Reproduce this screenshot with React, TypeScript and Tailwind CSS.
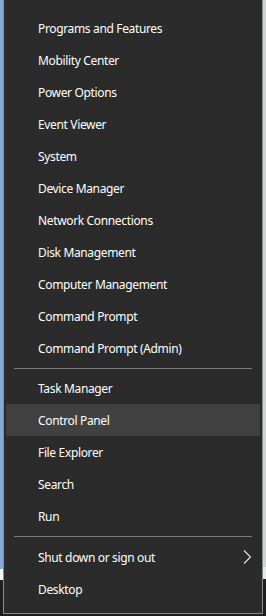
import React from "react";

const group1 = [
  "Programs and Features",
  "Mobility Center",
  "Power Options",
  "Event Viewer",
  "System",
  "Device Manager",
  "Network Connections",
  "Disk Management",
  "Computer Management",
  "Command Prompt",
  "Command Prompt (Admin)",
];
const group2 = ["Task Manager", "Control Panel", "File Explorer", "Search", "Run"];

function Item({ label, active, chevron }: { label: string; active?: boolean; chevron?: boolean }) {
  return (
    <div
      className={
        "mx-[2px] h-[32px] flex items-center pl-[32px] pr-[8px] " +
        (active ? "bg-[#414141]" : "")
      }
    >
      <span className="flex-1 text-[12px] tracking-[-0.35px] text-white leading-none translate-y-[1px]">{label}</span>
      {chevron && (
        <svg width="9" height="14" viewBox="0 0 9 14">
          <path d="M1 0.5 L7.5 7 L1 13.5" fill="none" stroke="#e8e8e8" strokeWidth="1.1" />
        </svg>
      )}
    </div>
  );
}

function Sep({ h }: { h: string }) {
  return (
    <div className={h + " flex items-center px-[10px]"}>
      <div className="h-px w-full bg-[#7a7a7a]" />
    </div>
  );
}

export default function App() {
  return (
    <div
      className="w-[266px] h-[616px] bg-[#1f1f1f] flex overflow-hidden"
      style={{ fontFamily: '"Noto Sans", "Open Sans", Arial, sans-serif' }}
    >
      <div className="w-[3px] flex flex-col">
        <div className="h-[569px] bg-[#86aad6]" />
        <div className="h-[11px] bg-[#f4f6fa]" />
        <div className="flex-1 bg-[#1f1f1f]" />
      </div>
      <div className="w-[260px] flex flex-col">
        <div className="h-[614px] bg-[#2b2b2b] border-x border-b border-[#8c8c8c] pt-[12px] flex flex-col">
          {group1.map((l) => (
            <Item key={l} label={l} />
          ))}
          <Sep h="h-[8px]" />
          {group2.map((l) => (
            <Item key={l} label={l} active={l === "Control Panel"} />
          ))}
          <Sep h="h-[9px]" />
          <Item label="Shut down or sign out" chevron />
          <Item label="Desktop" />
        </div>
        <div className="flex-1 bg-[#1f1f1f]" />
      </div>
      <div className="w-[3px] flex flex-col">
        <div className="h-[567px] bg-[#cfd4da]" />
        <div className="h-[12px] bg-[#e4e9f0]" />
        <div className="flex-1 bg-[#1f1f1f]" />
      </div>
    </div>
  );
}
